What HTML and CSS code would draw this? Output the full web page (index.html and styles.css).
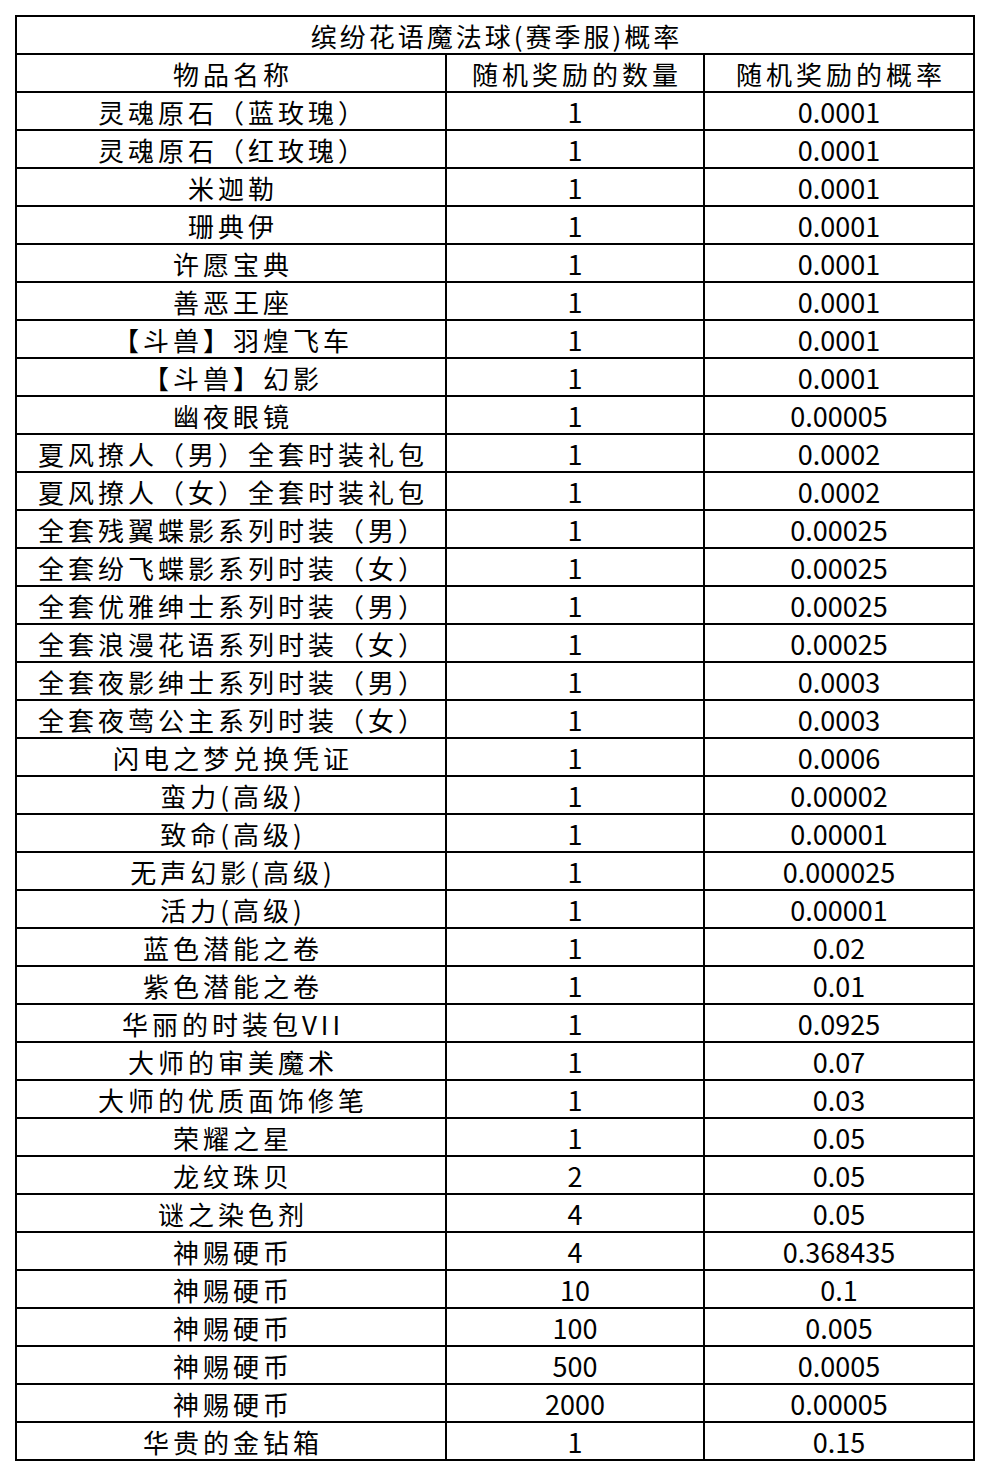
FILE: index.html
```html
<!DOCTYPE html>
<html lang="zh-CN">
<head>
<meta charset="utf-8">
<title>缤纷花语魔法球(赛季服)概率</title>
<link rel="stylesheet" href="styles.css">
</head>
<body>
<div class="sheet">
  <div class="cell title cjk">缤纷花语魔法球(赛季服)概率</div>
  <div class="cell cjk">物品名称</div><div class="cell cjk">随机奖励的数量</div><div class="cell cjk">随机奖励的概率</div>
  <div class="cell cjk">灵魂原石（蓝玫瑰）</div><div class="cell num">1</div><div class="cell num">0.0001</div>
  <div class="cell cjk">灵魂原石（红玫瑰）</div><div class="cell num">1</div><div class="cell num">0.0001</div>
  <div class="cell cjk">米迦勒</div><div class="cell num">1</div><div class="cell num">0.0001</div>
  <div class="cell cjk">珊典伊</div><div class="cell num">1</div><div class="cell num">0.0001</div>
  <div class="cell cjk">许愿宝典</div><div class="cell num">1</div><div class="cell num">0.0001</div>
  <div class="cell cjk">善恶王座</div><div class="cell num">1</div><div class="cell num">0.0001</div>
  <div class="cell cjk">【斗兽】羽煌飞车</div><div class="cell num">1</div><div class="cell num">0.0001</div>
  <div class="cell cjk">【斗兽】幻影</div><div class="cell num">1</div><div class="cell num">0.0001</div>
  <div class="cell cjk">幽夜眼镜</div><div class="cell num">1</div><div class="cell num">0.00005</div>
  <div class="cell cjk">夏风撩人（男）全套时装礼包</div><div class="cell num">1</div><div class="cell num">0.0002</div>
  <div class="cell cjk">夏风撩人（女）全套时装礼包</div><div class="cell num">1</div><div class="cell num">0.0002</div>
  <div class="cell cjk">全套残翼蝶影系列时装（男）</div><div class="cell num">1</div><div class="cell num">0.00025</div>
  <div class="cell cjk">全套纷飞蝶影系列时装（女）</div><div class="cell num">1</div><div class="cell num">0.00025</div>
  <div class="cell cjk">全套优雅绅士系列时装（男）</div><div class="cell num">1</div><div class="cell num">0.00025</div>
  <div class="cell cjk">全套浪漫花语系列时装（女）</div><div class="cell num">1</div><div class="cell num">0.00025</div>
  <div class="cell cjk">全套夜影绅士系列时装（男）</div><div class="cell num">1</div><div class="cell num">0.0003</div>
  <div class="cell cjk">全套夜莺公主系列时装（女）</div><div class="cell num">1</div><div class="cell num">0.0003</div>
  <div class="cell cjk">闪电之梦兑换凭证</div><div class="cell num">1</div><div class="cell num">0.0006</div>
  <div class="cell cjk">蛮力(高级)</div><div class="cell num">1</div><div class="cell num">0.00002</div>
  <div class="cell cjk">致命(高级)</div><div class="cell num">1</div><div class="cell num">0.00001</div>
  <div class="cell cjk">无声幻影(高级)</div><div class="cell num">1</div><div class="cell num">0.000025</div>
  <div class="cell cjk">活力(高级)</div><div class="cell num">1</div><div class="cell num">0.00001</div>
  <div class="cell cjk">蓝色潜能之卷</div><div class="cell num">1</div><div class="cell num">0.02</div>
  <div class="cell cjk">紫色潜能之卷</div><div class="cell num">1</div><div class="cell num">0.01</div>
  <div class="cell cjk">华丽的时装包VII</div><div class="cell num">1</div><div class="cell num">0.0925</div>
  <div class="cell cjk">大师的审美魔术</div><div class="cell num">1</div><div class="cell num">0.07</div>
  <div class="cell cjk">大师的优质面饰修笔</div><div class="cell num">1</div><div class="cell num">0.03</div>
  <div class="cell cjk">荣耀之星</div><div class="cell num">1</div><div class="cell num">0.05</div>
  <div class="cell cjk">龙纹珠贝</div><div class="cell num">2</div><div class="cell num">0.05</div>
  <div class="cell cjk">谜之染色剂</div><div class="cell num">4</div><div class="cell num">0.05</div>
  <div class="cell cjk">神赐硬币</div><div class="cell num">4</div><div class="cell num">0.368435</div>
  <div class="cell cjk">神赐硬币</div><div class="cell num">10</div><div class="cell num">0.1</div>
  <div class="cell cjk">神赐硬币</div><div class="cell num">100</div><div class="cell num">0.005</div>
  <div class="cell cjk">神赐硬币</div><div class="cell num">500</div><div class="cell num">0.0005</div>
  <div class="cell cjk">神赐硬币</div><div class="cell num">2000</div><div class="cell num">0.00005</div>
  <div class="cell cjk">华贵的金钻箱</div><div class="cell num">1</div><div class="cell num">0.15</div>
</div>
</body>
</html>
```
FILE: styles.css
```css
html, body {
  margin: 0;
  padding: 0;
  background: #fff;
}

body {
  font-family: "Noto Sans CJK SC", "Noto Sans", sans-serif;
  color: #000;
}

.sheet {
  display: grid;
  grid-template-columns: 428px 256px 268px;
  grid-auto-rows: 36px;
  gap: 2px;
  padding: 2px;
  background: #000;
  width: max-content;
  margin: 15px 0 0 15px;
}

.cell {
  background: #fff;
  display: flex;
  align-items: flex-end;
  justify-content: center;
  white-space: nowrap;
  box-sizing: border-box;
  height: 36px;
}

.cjk {
  font-size: 26px;
  line-height: 34px;
  letter-spacing: 4px;
  text-indent: 4px;
}

.num {
  font-size: 27px;
  line-height: 34px;
  letter-spacing: 0;
}

.title {
  grid-column: 1 / -1;
  letter-spacing: 3px;
  text-indent: 3px;
}
```
